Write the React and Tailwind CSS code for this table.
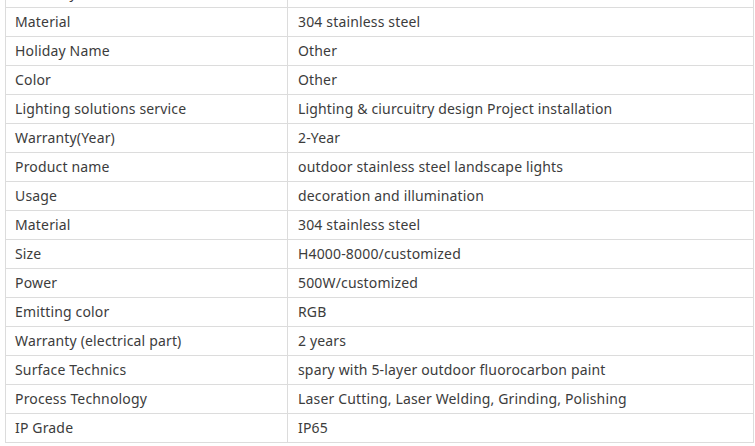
import React from "react";

const rows = [
    ["Warranty", ""],
    ["Material", "304 stainless steel"],
    ["Holiday Name", "Other"],
    ["Color", "Other"],
    ["Lighting solutions service", "Lighting & ciurcuitry design Project installation"],
    ["Warranty(Year)", "2-Year"],
    ["Product name", "outdoor stainless steel landscape lights"],
    ["Usage", "decoration and illumination"],
    ["Material", "304 stainless steel"],
    ["Size", "H4000-8000/customized"],
    ["Power", "500W/customized"],
    ["Emitting color", "RGB"],
    ["Warranty (electrical part)", "2 years"],
    ["Surface Technics", "spary with 5-layer outdoor fluorocarbon paint"],
    ["Process Technology", "Laser Cutting, Laser Welding, Grinding, Polishing"],
    ["IP Grade", "IP65"],
];

const App = () => {
    return (
        <div className="w-[755px] h-[446px] overflow-hidden bg-white">
            <table
                className="ml-[5px] mt-[-22px] w-[749px] border-collapse text-[14px] tracking-[0.16px] text-[#3c3c3c]"
                style={{ fontFamily: '"Noto Sans", "Open Sans", sans-serif' }}
            >
                <tbody>
                    {rows.map(([name, value], i) => (
                        <tr key={i} className="h-[29px]">
                            <td className="w-[282px] border border-[#dcdcdc] px-[9px] py-0 leading-[28px]">{name}</td>
                            <td className="border border-[#dcdcdc] px-[10px] py-0 leading-[28px]">{value}</td>
                        </tr>
                    ))}
                </tbody>
            </table>
        </div>
    );
};

export default App;
